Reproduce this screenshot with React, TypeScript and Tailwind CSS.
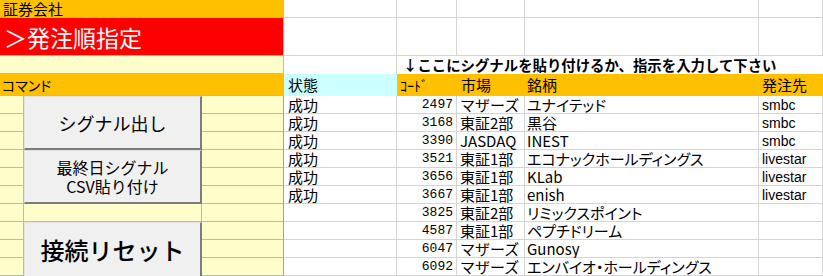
const jp = "font-['Noto_Sans_CJK_JP',sans-serif]";
const yl = "bg-[#ffffcc] border-r border-b border-[#b8b8b8]";
const wh = "bg-white border-r border-b border-[#d4d4d4] flex items-center";
const palt = "[font-feature-settings:'palt']";

const rows = [
  ["成功", "2497", "マザーズ", "ユナイテッド", "smbc"],
  ["成功", "3168", "東証2部", "黒谷", "smbc"],
  ["成功", "3390", "JASDAQ", "INEST", "smbc"],
  ["成功", "3521", "東証1部", "エコナックホールディングス", "livestar"],
  ["成功", "3656", "東証1部", "KLab", "livestar"],
  ["成功", "3667", "東証1部", "enish", "livestar"],
  ["", "3825", "東証2部", "リミックスポイント", ""],
  ["", "4587", "東証1部", "ペプチドリーム", ""],
  ["", "6047", "マザーズ", "Gunosy", ""],
  ["", "6092", "マザーズ", "エンバイオ・ホールディングス", ""],
];

const btn =
  "row-span-3 flex flex-col items-center justify-center bg-[#f0f0f0] border-t border-l border-[#e3e3e3] border-r-2 border-r-[#7c7c7c] text-black";

function CommandCell({ i }: { i: number }) {
  if (i === 0)
    return (
      <div className={`${btn} border-b-2 border-b-[#7c7c7c] text-[18px] leading-[22px]`}>
        シグナル出し
      </div>
    );
  if (i === 3)
    return (
      <div className={`${btn} border-b-2 border-b-[#7c7c7c] text-[16px] leading-[19px]`}>
        <span>最終日シグナル</span>
        <span>CSV貼り付け</span>
      </div>
    );
  if (i === 6) return <div className={yl} />;
  if (i === 7)
    return (
      <div className={`${btn} text-[24px] leading-[28px] font-medium`}>接続リセット</div>
    );
  return null;
}

export default function App() {
  return (
    <div
      className={`grid w-[823px] h-[276px] overflow-hidden bg-white text-black ${jp} grid-cols-[24px_178px_82px_113px_60px_68px_234px_64px] grid-rows-[18px_38px_18px_22px_repeat(10,18px)]`}
    >
      {/* row 1 */}
      <div className="col-span-3 bg-[#ffc000] border-r border-b border-[#b8b8b8] pl-[3px] flex items-center text-[15px] leading-[16px]">
        証券会社
      </div>
      {[0, 1, 2, 3, 4].map((c) => (
        <div key={"r1" + c} className={wh} />
      ))}

      {/* row 2 */}
      <div className="col-span-3 bg-[#ff0000] border-r border-b border-[#b8b8b8] pl-[4px] flex items-center text-white text-[23px] leading-[28px]">
        ＞発注順指定
      </div>
      {[0, 1, 2, 3, 4].map((c) => (
        <div key={"r2" + c} className={wh} />
      ))}

      {/* row 3 */}
      <div className={`col-span-3 ${yl}`} />
      <div className="bg-white border-r border-[#d4d4d4]" />
      <div className="col-span-4 bg-white pl-[6px] flex items-center text-[14.4px] font-bold leading-[16px] whitespace-nowrap">
        ↓ここにシグナルを貼り付けるか、指示を入力して下さい
      </div>

      {/* row 4 header */}
      <div className={`col-span-3 bg-[#ffc000] border-r border-b border-[#b8b8b8] pl-[2px] flex items-center text-[14px] leading-[16px] ${palt}`}>
        コマンド
      </div>
      <div className="bg-[#ccffff] pl-[4px] flex items-center text-[15px] leading-[16px]">状態</div>
      <div className="bg-[#ffc000] pl-[3px] flex items-center text-[14px] leading-[16px]">ｺｰﾄﾞ</div>
      <div className="bg-[#ffc000] pl-[4px] flex items-center text-[15px] leading-[16px]">市場</div>
      <div className="bg-[#ffc000] pl-[2px] flex items-center text-[15px] leading-[16px]">銘柄</div>
      <div className="bg-[#ffc000] pl-[3px] flex items-center text-[15px] leading-[16px]">発注先</div>

      {/* data rows */}
      {rows.map((r, i) => (
        <div key={i} className="contents">
          <div className={yl} />
          <CommandCell i={i} />
          <div className={`${yl} border-r-[#a0a0a0]`} />
          <div className={`${wh} pl-[4px] text-[15px] leading-[16px]`}>{r[0]}</div>
          <div className={`${wh} justify-end pr-[3px] font-['Liberation_Mono',monospace] text-[13px] leading-[16px]`}>
            {r[1]}
          </div>
          <div className={`${wh} pl-[3px] text-[15px] leading-[16px] whitespace-nowrap`}>{r[2]}</div>
          <div className={`${wh} pl-[2px] text-[15px] leading-[16px] whitespace-nowrap ${palt}`}>{r[3]}</div>
          <div className={`${wh} pl-[3px] font-['Liberation_Sans',sans-serif] text-[14px] leading-[16px]`}>{r[4]}</div>
        </div>
      ))}
    </div>
  );
}
